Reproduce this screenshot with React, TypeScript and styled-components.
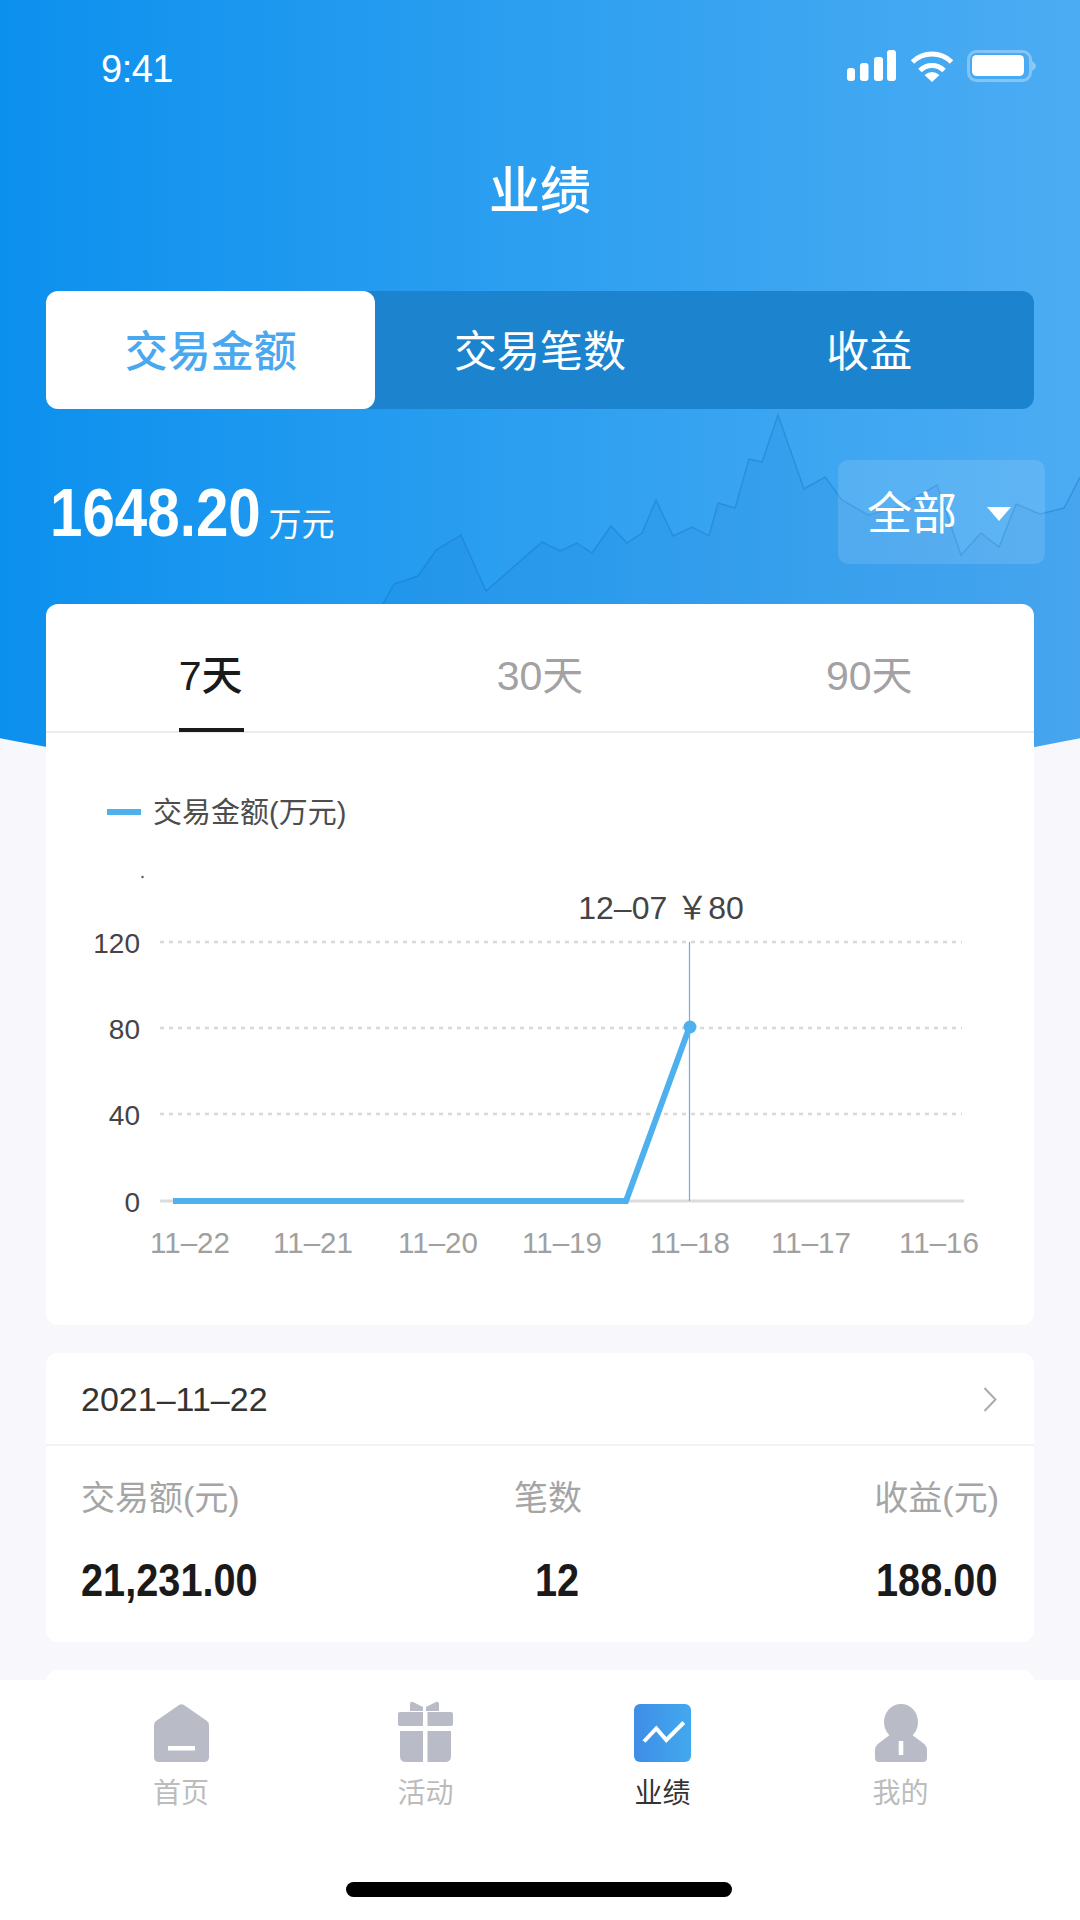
import React from "react";
import styled, { createGlobalStyle } from "styled-components";

const GlobalStyle = createGlobalStyle`
  html, body {
    margin: 0;
    padding: 0;
    background: #f8f7fb;
    font-family: "Liberation Sans", "Noto Sans CJK SC", sans-serif;
  }
  * {
    box-sizing: border-box;
  }
`;

const Screen = styled.div`
  position: relative;
  width: 1080px;
  height: 1920px;
  display: flex;
  flex-direction: column;
  overflow: hidden;
  background: #f8f7fb;
`;

const HeroBackground = styled.div`
  position: absolute;
  top: 0;
  left: 0;
  width: 1080px;
  height: 800px;
  background: linear-gradient(90deg, #0c90ee 0%, #2a9ef0 45%, #4cacf3 100%);
  clip-path: circle(2687px at 540px -1894px);
  svg {
    display: block;
  }
`;

const Content = styled.div`
  position: relative;
  flex: 1;
  min-height: 0;
  overflow: hidden;
`;

const StatusBar = styled.div`
  height: 132px;
  display: flex;
  align-items: center;
  justify-content: space-between;
  padding: 0 43px 0 101px;
  color: #fff;
`;

const Time = styled.span`
  font-size: 38px;
  padding-top: 6px;
  letter-spacing: -0.5px;
`;

const StatusIcons = styled.div`
  display: flex;
  align-items: center;
  gap: 13px;
`;

const Title = styled.h1`
  margin: 0;
  height: 116px;
  line-height: 120px;
  text-align: center;
  font-size: 51px;
  font-weight: 500;
  color: #fff;
`;

const Segment = styled.div`
  margin: 43px 46px 0;
  height: 118px;
  display: grid;
  grid-template-columns: repeat(3, 1fr);
  background: #1c84cf;
  border-radius: 12px;
`;

const SegmentItem = styled.div<{ $active?: boolean }>`
  display: flex;
  align-items: center;
  justify-content: center;
  padding-bottom: 4px;
  font-size: 43px;
  font-weight: ${(p) => (p.$active ? 500 : 400)};
  color: ${(p) => (p.$active ? "#4aa8ee" : "#fff")};
  background: ${(p) => (p.$active ? "#fff" : "transparent")};
  border-radius: 12px;
`;

const SummaryRow = styled.div`
  height: 195px;
  padding: 51px 35px 0 50px;
  display: flex;
  justify-content: space-between;
  align-items: flex-start;
`;

const Amount = styled.div`
  display: flex;
  align-items: baseline;
  gap: 8px;
  color: #fff;
  height: 104px;
  line-height: 106px;
`;

const AmountValue = styled.span`
  display: inline-block;
  margin-right: -39px;
  font-size: 69px;
  font-weight: 700;
  transform: scaleX(0.845);
  transform-origin: left center;
`;

const AmountUnit = styled.span`
  font-size: 33px;
`;

const RangeButton = styled.div`
  width: 207px;
  height: 104px;
  padding: 0 0 3px 29px;
  display: flex;
  align-items: center;
  gap: 30px;
  border-radius: 10px;
  background: rgba(255, 255, 255, 0.12);
  color: #fff;
  font-size: 45px;
`;

const Triangle = styled.i`
  width: 0;
  height: 0;
  border-left: 12px solid transparent;
  border-right: 12px solid transparent;
  border-top: 14px solid #fff;
  margin-top: 7px;
`;

const Card = styled.section`
  margin: 0 46px 28px;
  background: #fff;
  border-radius: 12px;
`;

const RangeTabs = styled.div`
  height: 129px;
  display: grid;
  grid-template-columns: repeat(3, 1fr);
  border-bottom: 2px solid #ece9f0;
`;

const RangeTab = styled.div<{ $active?: boolean }>`
  position: relative;
  display: flex;
  align-items: center;
  justify-content: center;
  padding-top: 8px;
  font-size: 41px;
  font-weight: ${(p) => (p.$active ? 500 : 400)};
  color: ${(p) => (p.$active ? "#1a1a1a" : "#a3a1a3")};
  ${(p) =>
    p.$active &&
    `
    &::after {
      content: "";
      position: absolute;
      left: 133px;
      bottom: -1px;
      width: 65px;
      height: 4px;
      background: #1a1a1a;
    }
  `}
`;

const Legend = styled.div`
  margin-top: 65px;
  padding-left: 61px;
  height: 28px;
  display: flex;
  align-items: center;
  gap: 12px;
  font-size: 29px;
  color: #4d4d4d;
`;

const LegendSwatch = styled.i`
  width: 34px;
  height: 6px;
  background: #4fb0ee;
`;

const LegendText = styled.span`
  margin-top: -5px;
`;

const ChartBox = styled.svg`
  display: block;
  margin-top: 34px;
  width: 987px;
  height: 465px;
`;

const AxisY = styled.text`
  font-size: 28px;
  fill: #444;
  text-anchor: end;
`;

const AxisX = styled.text`
  font-size: 29.5px;
  fill: #a0a0a0;
  text-anchor: middle;
`;

const PointLabel = styled.text`
  font-size: 32px;
  fill: #444;
  text-anchor: middle;
`;

const DayHeader = styled.div`
  height: 93px;
  padding: 2px 37px 0 35px;
  display: flex;
  align-items: center;
  justify-content: space-between;
  border-bottom: 2px solid #f3f1f6;
  font-size: 34px;
  color: #333;
`;

const DayStats = styled.div`
  height: 196px;
  padding: 28px 35px 0;
  display: grid;
  grid-template-columns: 433px 1fr 1fr;
`;

const StatCol = styled.div<{ $right?: boolean }>`
  text-align: ${(p) => (p.$right ? "right" : "left")};
`;

const StatLabel = styled.div`
  height: 48px;
  line-height: 48px;
  font-size: 34px;
  color: #a5a5a5;
`;

const StatValue = styled.div<{ $indent?: number; $right?: boolean }>`
  margin-top: 34px;
  margin-left: ${(p) => p.$indent ?? 0}px;
  margin-right: ${(p) => (p.$right ? 2 : 0)}px;
  height: 48px;
  line-height: 48px;
  font-size: 47px;
  font-weight: 700;
  color: #1a1a1a;
  transform: scaleX(0.845);
  transform-origin: ${(p) => (p.$right ? "right" : "left")} center;
`;

const EmptyCard = styled(Card)`
  height: 200px;
`;

const TabBar = styled.nav`
  position: relative;
  height: 240px;
  flex-shrink: 0;
  background: #fff;
  padding: 20px 56px 0 59px;
  display: grid;
  grid-template-columns: 244px 245px 229px 247px;
  align-content: start;
`;

const TabItem = styled.div<{ $active?: boolean }>`
  display: flex;
  flex-direction: column;
  align-items: center;
  font-size: 28px;
  color: ${(p) => (p.$active ? "#333" : "#bcbcbc")};
`;

const TabIcon = styled.div`
  height: 62px;
  display: flex;
  align-items: flex-end;
  svg {
    display: block;
  }
`;

const TabLabel = styled.span`
  margin-top: 17px;
  line-height: 30px;
`;

const HomeIndicator = styled.div`
  position: absolute;
  left: 346px;
  bottom: 23px;
  width: 386px;
  height: 15px;
  border-radius: 8px;
  background: #000;
`;

const wavePoints =
  "383,604 394,584 418,576 436,550 461,535 486,591 542,542 560,551 577,543 592,553 611,526 627,543 642,533 656,500 673,536 692,527 709,536 718,503 735,508 749,459 762,462 778,415 804,489 825,477 842,500 868,515 899,507 937,485 961,555 981,533 999,547 1016,504 1040,514 1064,508 1080,477";

const yAxis = [
  { label: "120", y: 943 },
  { label: "80", y: 1029 },
  { label: "40", y: 1115 },
];

const xAxis = [
  { label: "11–22", x: 190 },
  { label: "11–21", x: 313 },
  { label: "11–20", x: 438 },
  { label: "11–19", x: 562 },
  { label: "11–18", x: 690 },
  { label: "11–17", x: 811 },
  { label: "11–16", x: 939 },
];

const SignalIcon = () => (
  <svg width="50" height="32" viewBox="0 0 50 32" fill="#fff">
    <rect x="0" y="18" width="8" height="13" rx="3" />
    <rect x="13" y="13" width="8.5" height="18" rx="3" />
    <rect x="27" y="7" width="9" height="24" rx="3" />
    <rect x="40" y="0" width="9" height="31" rx="3" />
  </svg>
);

const WifiIcon = () => (
  <svg width="44" height="32" viewBox="0 0 44 32" fill="none">
    <path d="M2.5 12A28 28 0 0 1 41.5 12" stroke="#fff" strokeWidth="5" />
    <path d="M10 20.5A17 17 0 0 1 34 20.5" stroke="#fff" strokeWidth="5" />
    <path d="M22 32L14.5 25Q22 19 29.5 25Z" fill="#fff" />
  </svg>
);

const BatteryIcon = () => (
  <svg width="70" height="32" viewBox="0 0 70 32">
    <rect x="1.5" y="1.5" width="62" height="29" rx="8" fill="none" stroke="rgba(255,255,255,.32)" strokeWidth="3" />
    <rect x="5" y="5" width="52" height="21" rx="4.5" fill="#fff" />
    <path d="M65 11v10c2-1 4-3 4-5s-2-4-4-5z" fill="rgba(255,255,255,.35)" />
  </svg>
);

const HomeTabIcon = () => (
  <svg width="55" height="58" viewBox="0 0 55 58">
    <path d="M25 1q2.5-1.500 5 0L53 17q2 1.500 2 4V53q0 5-5 5H5q-5 0-5-5V21q0-2.500 2-4Z" fill="#b9bcc6" />
    <rect x="14" y="42" width="27" height="4.500" fill="#fff" />
  </svg>
);

const GiftTabIcon = () => (
  <svg width="55" height="61" viewBox="0 0 55 61" fill="#b9bcc6">
    <path d="M12 3q0-3 3-2L25 6v4H12Z" />
    <path d="M28 6L38 1q3-1 3 2V10H28Z" />
    <path d="M2 11H25V25H2q-2 0-2-2V13q0-2 2-2Z" />
    <path d="M29.500 11H53q2 0 2 2V23q0 2-2 2H29.500Z" />
    <path d="M2 30H25V61H8q-6 0-6-6Z" />
    <path d="M29.500 30H53V55q0 6-6 6H29.500Z" />
  </svg>
);

const ChartTabIcon = () => (
  <svg width="57" height="58" viewBox="0 0 57 58">
    <defs>
      <linearGradient id="perfTab" x1="0" x2="1" y1="0" y2="0">
        <stop offset="0" stopColor="#3f8de7" />
        <stop offset="1" stopColor="#42a9ee" />
      </linearGradient>
    </defs>
    <rect width="57" height="58" rx="6" fill="url(#perfTab)" />
    <path d="M10 37.500L22.300 24.500L32.300 36L49.800 18.500" fill="none" stroke="#fff" strokeWidth="4" />
  </svg>
);

const UserTabIcon = () => (
  <svg width="52" height="58" viewBox="0 0 52 58">
    <ellipse cx="26" cy="18" rx="17" ry="18" fill="#b9bcc6" />
    <path d="M16 28h20v2l12 9q4 3 4 7v8q0 4-4 4H4q-4 0-4-4v-8q0-4 4-7l12-9Z" fill="#b9bcc6" />
    <rect x="23.700" y="37" width="4.600" height="14" fill="#fff" />
  </svg>
);

const App = () => (
  <Screen>
    <GlobalStyle />
    <HeroBackground>
      <svg width="1080" height="800" viewBox="0 0 1080 800">
        <polygon points={`${wavePoints} 1080,800 383,800`} fill="rgba(10,105,190,.09)" />
        <polyline points={wavePoints} fill="none" stroke="rgba(15,105,190,.32)" strokeWidth="1.500" />
      </svg>
    </HeroBackground>

    <Content>
      <StatusBar>
        <Time>9:41</Time>
        <StatusIcons>
          <SignalIcon />
          <WifiIcon />
          <BatteryIcon />
        </StatusIcons>
      </StatusBar>
      <Title>业绩</Title>

      <Segment>
        <SegmentItem $active>交易金额</SegmentItem>
        <SegmentItem>交易笔数</SegmentItem>
        <SegmentItem>收益</SegmentItem>
      </Segment>

      <SummaryRow>
        <Amount>
          <AmountValue>1648.20</AmountValue>
          <AmountUnit>万元</AmountUnit>
        </Amount>
        <RangeButton>
          全部
          <Triangle />
        </RangeButton>
      </SummaryRow>

      <Card>
        <RangeTabs>
          <RangeTab $active>7天</RangeTab>
          <RangeTab>30天</RangeTab>
          <RangeTab>90天</RangeTab>
        </RangeTabs>
        <Legend>
          <LegendSwatch />
          <LegendText>交易金额(万元)</LegendText>
        </Legend>
        <ChartBox viewBox="46 860 987 465">
          <circle cx="142.500" cy="877" r="1.200" fill="#555" />
          {[942, 1028, 1114].map((y) => (
            <line key={y} x1="160" x2="962" y1={y} y2={y} stroke="#d8d8d8" strokeWidth="2.500" strokeDasharray="4 5" />
          ))}
          <line x1="160" x2="964" y1="1201" y2="1201" stroke="#dcdcdc" strokeWidth="3" />
          <line x1="689.500" x2="689.500" y1="942" y2="1201" stroke="#5ab4f0" strokeWidth="1.200" />
          <polyline points="173,1201 626,1201 689.500,1027" fill="none" stroke="#4fb0ee" strokeWidth="6" />
          <circle cx="690" cy="1027" r="6.500" fill="#4fb0ee" />
          <PointLabel x="661" y="919">12–07 ￥80</PointLabel>
          {yAxis.map((t) => (
            <AxisY key={t.label} x="140" y={t.y + 10}>{t.label}</AxisY>
          ))}
          <AxisY x="140" y="1212">0</AxisY>
          {xAxis.map((t) => (
            <AxisX key={t.label} x={t.x} y="1253">{t.label}</AxisX>
          ))}
        </ChartBox>
      </Card>

      <Card>
        <DayHeader>
          2021–11–22
          <svg width="14" height="25" viewBox="0 0 14 25" fill="none">
            <path d="M1.500 1L12.500 12.500L1.500 24" stroke="#ababab" strokeWidth="2" />
          </svg>
        </DayHeader>
        <DayStats>
          <StatCol>
            <StatLabel>交易额(元)</StatLabel>
            <StatValue>21,231.00</StatValue>
          </StatCol>
          <StatCol>
            <StatLabel>笔数</StatLabel>
            <StatValue $indent={21}>12</StatValue>
          </StatCol>
          <StatCol $right>
            <StatLabel>收益(元)</StatLabel>
            <StatValue $right>188.00</StatValue>
          </StatCol>
        </DayStats>
      </Card>

      <EmptyCard />
    </Content>

    <TabBar>
      <TabItem>
        <TabIcon><HomeTabIcon /></TabIcon>
        <TabLabel>首页</TabLabel>
      </TabItem>
      <TabItem>
        <TabIcon><GiftTabIcon /></TabIcon>
        <TabLabel>活动</TabLabel>
      </TabItem>
      <TabItem $active>
        <TabIcon><ChartTabIcon /></TabIcon>
        <TabLabel>业绩</TabLabel>
      </TabItem>
      <TabItem>
        <TabIcon><UserTabIcon /></TabIcon>
        <TabLabel>我的</TabLabel>
      </TabItem>
      <HomeIndicator />
    </TabBar>
  </Screen>
);

export default App;
